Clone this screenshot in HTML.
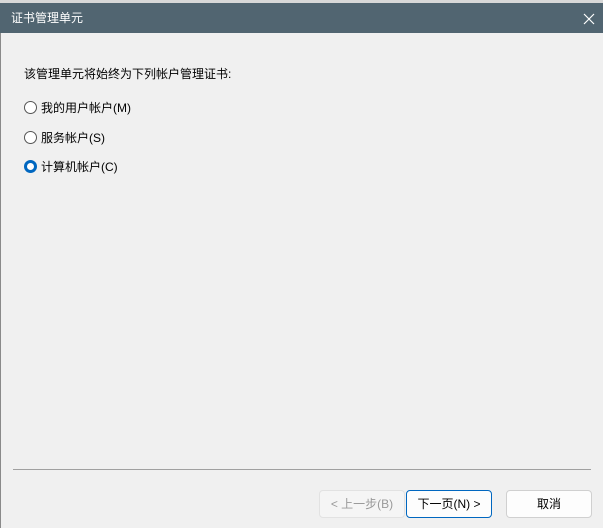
<!DOCTYPE html>
<html><head><meta charset="utf-8"><style>
*{margin:0;padding:0;box-sizing:border-box}
body{width:603px;height:528px;background:#f0f0f0;font-family:"Liberation Sans","Noto Sans CJK SC",sans-serif;font-size:12px;color:#000;position:relative;overflow:hidden}
.top{position:absolute;left:0;top:0;width:603px;height:3px;background:#d8d8d8}
.tb{position:absolute;left:0;top:3px;width:603px;height:30px;background:#516571;color:#fff;font-size:12px;line-height:30px;padding-left:11px}
.x{position:absolute;right:8px;top:10px}
.lb{position:absolute;left:0;top:33px;width:1px;height:495px;background:#8a8a8a}
.t{position:absolute;left:24px;white-space:nowrap}
.r{position:absolute;left:24px;width:13px;height:13px;border:1px solid #555;border-radius:50%;background:#fff}
.r.on{border:3.5px solid #0067c0}
.line{position:absolute;left:13px;top:469px;width:578px;height:1px;background:#a0a0a0}
.b{position:absolute;top:490px;height:28px;border:1px solid #d0d0d0;border-radius:4px;background:#fdfdfd;text-align:center;line-height:26px;font-size:12px}
</style></head><body>
<div class="top"></div>
<div class="tb">证书管理单元<svg class="x" width="12" height="12" viewBox="0 0 12 12"><path d="M1 1L11 11M11 1L1 11" stroke="#fff" stroke-width="1.2"/></svg></div>
<div class="lb"></div>
<div class="t" style="top:65px">该管理单元将始终为下列帐户管理证书:</div>
<div class="r" style="top:101px"></div><div class="t" style="left:41px;top:99px">我的用户帐户(M)</div>
<div class="r" style="top:131px"></div><div class="t" style="left:41px;top:129px">服务帐户(S)</div>
<div class="r on" style="top:160px"></div><div class="t" style="left:41px;top:158px">计算机帐户(C)</div>
<div class="line"></div>
<div class="b" style="left:319px;width:86px;color:#9a9a9a;background:#f5f5f5;border-color:#e2e2e2">&lt; 上一步(B)</div>
<div class="b" style="left:406px;width:86px;border-color:#0067c0">下一页(N) &gt;</div>
<div class="b" style="left:506px;width:86px">取消</div>
</body></html>
